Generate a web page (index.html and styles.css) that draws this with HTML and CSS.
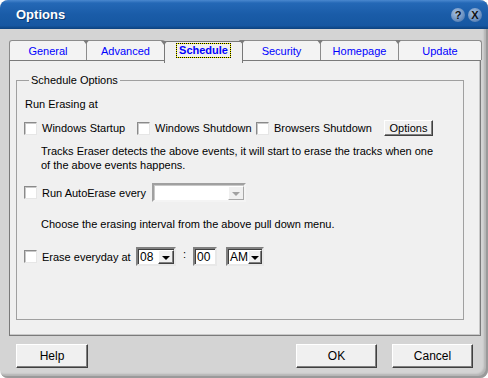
FILE: index.html
```html
<!DOCTYPE html>
<html lang="en">
<head>
  <meta charset="UTF-8" />
  <link rel="stylesheet" href="styles.css">
</head>
<body>
  <div class="window">
    <div class="titlebar">
      <span class="title">Options</span>
      <div class="title-buttons">
        <span class="tbtn">?</span>
        <span class="tbtn">X</span>
      </div>
    </div>

    <div class="tabs">
      <div class="tab t1">General</div>
      <div class="tab t2">Advanced</div>
      <div class="tab t3 active"><span class="focus">Schedule</span></div>
      <div class="tab t4">Security</div>
      <div class="tab t5">Homepage</div>
      <div class="tab t6">Update</div>
    </div>

    <div class="panel">
      <fieldset class="group">
        <legend>Schedule Options</legend>

        <div class="line first">Run Erasing at</div>

        <div class="events">
          <label class="check"><span class="box"></span>Windows Startup</label>
          <label class="check"><span class="box"></span>Windows Shutdown</label>
          <label class="check"><span class="box"></span>Browsers Shutdown</label>
          <span class="btn small">Options</span>
        </div>

        <div class="note desc">Tracks Eraser detects the above events, it will start to erase the tracks when one of the above events happens.</div>

        <div class="auto">
          <label class="check"><span class="box"></span>Run AutoErase every</label>
          <div class="combo disabled wide">
            <span class="value"></span>
            <span class="arrow"></span>
          </div>
        </div>

        <div class="note choose">Choose the erasing interval from the above pull down menu.</div>

        <div class="daily">
          <label class="check"><span class="box"></span>Erase everyday at</label>
          <div class="combo hour">
            <span class="value">08</span>
            <span class="arrow"></span>
          </div>
          <span class="colon">:</span>
          <div class="field minute">00</div>
          <div class="combo ampm">
            <span class="value">AM</span>
            <span class="arrow"></span>
          </div>
        </div>
      </fieldset>
    </div>

    <div class="actions">
      <span class="btn help">Help</span>
      <span class="btn ok">OK</span>
      <span class="btn cancel">Cancel</span>
    </div>
  </div>
</body>
</html>
```

FILE: styles.css
```css
:root {
  --frame: #d4d4d4;
  --face: #f0f0f0;
  --edge: #808080;
  --dark: #404040;
  --tab-text: #0000ff;
  --font-base: "Liberation Sans", Arial, sans-serif;
}
*, *::before, *::after { box-sizing: border-box; }
body {
  margin: 0;
  background: #fff;
  font-family: var(--font-base);
  font-size: 11px;
  color: #000;
}
.window {
  width: 488px;
  height: 378px;
  background: var(--frame);
  border-radius: 8px;
  overflow: hidden;
  display: flex;
  flex-direction: column;
  box-shadow: inset -2px -2px 0 #9a9a9a, inset -4px -4px 2px rgba(0,0,0,0.15);
}

/* Title bar */
.titlebar {
  height: 29px;
  flex: none;
  display: flex;
  align-items: center;
  padding: 0 6px 0 16px;
  background: linear-gradient(#4a88cf 0, #2468b6 3px, #1a5ca8 50%, #1657a2 88%, #0c427f 100%);
}
.title {
  color: #fff;
  font-weight: bold;
  font-size: 13px;
  text-shadow: 1px 1px 0 #0b3a72;
}
.title-buttons { margin-left: auto; display: flex; gap: 3px; }
.tbtn {
  width: 14px;
  height: 14px;
  border-radius: 50%;
  background: radial-gradient(circle at 40% 35%, #a9c3e2 0, #6f94c3 55%, #3e6aa3 100%);
  color: #111;
  font-weight: bold;
  font-size: 11px;
  line-height: 14px;
  text-align: center;
}

/* Tabs */
.tabs {
  display: flex;
  height: 20px;
  margin: 11px 0 0 9px;
  align-items: flex-start;
}
.tab {
  position: relative;
  height: 20px;
  margin-left: -1px;
  border: 1px solid #8c8c8c;
  border-bottom: none;
  border-radius: 3px 3px 0 0;
  background: #f3f3f3;
  color: var(--tab-text);
  text-align: center;
  line-height: 21px;
}
.tab::before {
  content: "";
  position: absolute;
  top: -1px;
  left: -4px;
  border-left: 3px solid transparent;
  border-right: 3px solid transparent;
  border-top: 4px solid #7c7c7c;
}
.tab.t1 { margin-left: 0; width: 78px; }
.tab.t1::before { display: none; }
.t2 { width: 79px; }
.t3 { width: 79px; }
.t4 { width: 79px; }
.t5 { width: 79px; }
.t6 { width: 84px; }
.tab.active {
  z-index: 1;
  margin-top: 1px;
  height: 22px;
  background: var(--face);
  border-color: #777;
  line-height: 17px;
}
.focus {
  display: inline-block;
  margin-top: 1px;
  padding: 0 2px;
  font-weight: bold;
  line-height: 13px;
  border: 1px dotted #000;
  background: linear-gradient(var(--face), var(--face)) padding-box, #f5f500 border-box;
}

/* Panel */
.panel {
  margin-left: 9px;
  width: 472px;
  height: 276px;
  flex: none;
  border: 1px solid #7a7a7a;
  box-shadow: inset -1px -1px 0 #c8c8c8;
  background: var(--face);
  padding: 13px 0 0 6px;
}
.group {
  margin: 0;
  width: 448px;
  height: 246px;
  border: 1px solid #a0a0a0;
  padding: 0 0 0 7px;
  min-width: 0;
}
.group legend {
  margin-left: 5px;
  padding: 0 2px;
  line-height: 13px;
}
.line, .note { line-height: 14px; }
.first { margin-top: 10px; padding-left: 1px; }
.note { padding-left: 17px; width: 412px; }
.desc { margin-top: 8px; }
.choose { margin-top: 15px; }

.check {
  display: flex;
  align-items: center;
  gap: 5px;
  white-space: nowrap;
}
.box {
  width: 13px;
  height: 13px;
  flex: none;
  background: #fff;
  border: 1px solid;
  border-color: #8a8a8a #e6e6e6 #e6e6e6 #8a8a8a;
  box-shadow: inset 1px 1px 0 #c8c8c8;
}

.events {
  margin-top: 9px;
  height: 16px;
  display: grid;
  grid-template-columns: 113px 119px 128px 49px;
  align-items: center;
}
.auto, .daily {
  height: 19px;
  display: flex;
  align-items: center;
}
.auto { margin-top: 11px; }
.auto .check { width: 128px; }
.daily { margin-top: 16px; }
.daily .check { width: 112px; }

/* Combos and fields */
.combo, .field {
  height: 19px;
  background: #fff;
  border: 2px solid;
  border-color: #808080 #e8e8e8 #e8e8e8 #808080;
  box-shadow: inset 1px 1px 0 #404040;
  display: flex;
}
.combo .value { flex: 1; padding: 1px 0 0 2px; line-height: 14px; font-size: 12px; }
.combo .arrow {
  width: 16px;
  margin: 1px 0 0 0;
  background: var(--face);
  border: 1px solid;
  border-color: #fff #404040 #404040 #fff;
  box-shadow: inset -1px -1px 0 #808080;
  display: flex;
  align-items: center;
  justify-content: center;
}
.combo .arrow::after {
  content: "";
  border-left: 4px solid transparent;
  border-right: 4px solid transparent;
  border-top: 4px solid #000;
  margin-top: 1px;
}
.combo.disabled { border-color: #a0a0a0 #f4f4f4 #f4f4f4 #a0a0a0; box-shadow: inset 1px 1px 0 #c8c8c8; }
.combo.disabled .arrow { border-color: #fff #a8a8a8 #a8a8a8 #fff; box-shadow: none; }
.combo.disabled .arrow::after { border-top-color: #a0a0a0; }
.wide { width: 94px; }
.hour { width: 40px; }
.ampm { width: 38px; }
.colon { width: 17px; text-align: center; margin-top: -5px; }
.field.minute {
  width: 24px;
  margin-right: 9px;
  padding: 1px 0 0 2px;
  line-height: 14px;
  font-size: 12px;
}

/* Buttons */
.btn {
  display: flex;
  align-items: center;
  justify-content: center;
  background: var(--face);
  border: 1px solid;
  border-color: #fff #404040 #404040 #fff;
  box-shadow: inset -1px -1px 0 #808080;
}
.btn.small { height: 16px; }
.actions {
  display: flex;
  margin-top: 8px;
  padding: 0 15px 0 16px;
}
.actions .btn { height: 24px; font-size: 12px; }
.help { width: 72px; }
.ok { width: 81px; margin-left: auto; }
.cancel { width: 81px; margin-left: 15px; }
```
